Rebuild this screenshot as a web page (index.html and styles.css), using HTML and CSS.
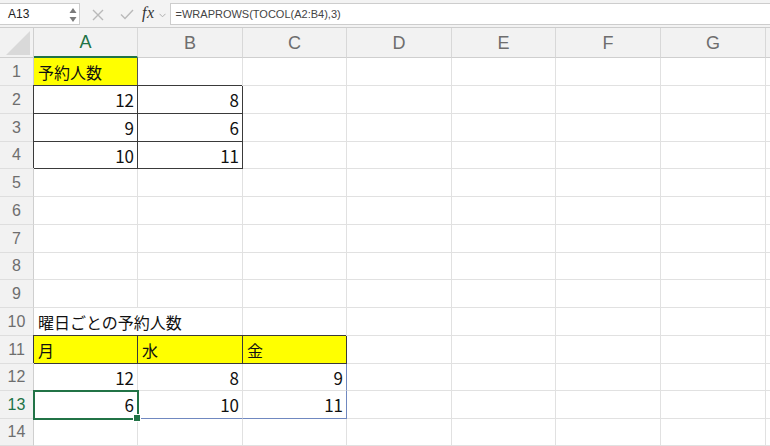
FILE: index.html
```html
<!DOCTYPE html>
<html lang="ja">
<head>
<meta charset="utf-8">
<title>Sheet</title>
<link rel="stylesheet" href="styles.css">
</head>
<body>
<div class="topbar">
  <div class="namebox">
    <span class="ref">A13</span>
    <svg class="spin" width="8" height="16" viewBox="0 0 8 16"><polygon points="4,1 7.5,6 0.5,6" fill="#7a7a7a"/><polygon points="0.5,10 7.5,10 4,15" fill="#7a7a7a"/></svg>
  </div>
  <svg class="ico cancel" width="12" height="12" viewBox="0 0 12 12"><path d="M1 1 L11 11 M11 1 L1 11" stroke="#b9b9b9" stroke-width="1.4" fill="none"/></svg>
  <svg class="ico ok" width="14" height="11" viewBox="0 0 14 11"><path d="M1 5.5 L5 9.5 L13 1" stroke="#b9b9b9" stroke-width="1.4" fill="none"/></svg>
  <span class="fx">fx</span>
  <svg class="chev" width="7" height="5" viewBox="0 0 7 5"><path d="M0.5 0.8 L3.5 3.8 L6.5 0.8" stroke="#b0b0b0" stroke-width="1" fill="none"/></svg>
  <div class="formula">=WRAPROWS(TOCOL(A2:B4),3)</div>
</div>
<div class="sheet">
  <div class="corner"><svg width="34" height="30" viewBox="0 0 34 30"><polygon points="30,3 30,27 6,27" fill="#d9d9d9"/></svg></div>
  <div class="ch on">A</div><div class="ch">B</div><div class="ch">C</div><div class="ch">D</div><div class="ch">E</div><div class="ch">F</div><div class="ch">G</div><div class="ch"></div>

  <div class="rh">1</div>
  <div class="c y a1">予約人数</div><div class="c"></div><div class="c"></div><div class="c"></div><div class="c"></div><div class="c"></div><div class="c"></div><div class="c"></div>

  <div class="rh">2</div>
  <div class="c n bx">12</div><div class="c n bx">8</div><div class="c"></div><div class="c"></div><div class="c"></div><div class="c"></div><div class="c"></div><div class="c"></div>

  <div class="rh">3</div>
  <div class="c n bx">9</div><div class="c n bx">6</div><div class="c"></div><div class="c"></div><div class="c"></div><div class="c"></div><div class="c"></div><div class="c"></div>

  <div class="rh">4</div>
  <div class="c n bx">10</div><div class="c n bx">11</div><div class="c"></div><div class="c"></div><div class="c"></div><div class="c"></div><div class="c"></div><div class="c"></div>

  <div class="rh">5</div>
  <div class="c"></div><div class="c"></div><div class="c"></div><div class="c"></div><div class="c"></div><div class="c"></div><div class="c"></div><div class="c"></div>

  <div class="rh">6</div>
  <div class="c"></div><div class="c"></div><div class="c"></div><div class="c"></div><div class="c"></div><div class="c"></div><div class="c"></div><div class="c"></div>

  <div class="rh">7</div>
  <div class="c"></div><div class="c"></div><div class="c"></div><div class="c"></div><div class="c"></div><div class="c"></div><div class="c"></div><div class="c"></div>

  <div class="rh">8</div>
  <div class="c"></div><div class="c"></div><div class="c"></div><div class="c"></div><div class="c"></div><div class="c"></div><div class="c"></div><div class="c"></div>

  <div class="rh">9</div>
  <div class="c"></div><div class="c"></div><div class="c"></div><div class="c"></div><div class="c"></div><div class="c"></div><div class="c"></div><div class="c"></div>

  <div class="rh">10</div>
  <div class="c ov">曜日ごとの予約人数</div><div class="c"></div><div class="c"></div><div class="c"></div><div class="c"></div><div class="c"></div><div class="c"></div><div class="c"></div>

  <div class="rh">11</div>
  <div class="c y bx">月</div><div class="c y bx">水</div><div class="c y bx">金</div><div class="c"></div><div class="c"></div><div class="c"></div><div class="c"></div><div class="c"></div>

  <div class="rh">12</div>
  <div class="c n">12</div><div class="c n">8</div><div class="c n sr">9</div><div class="c"></div><div class="c"></div><div class="c"></div><div class="c"></div><div class="c"></div>

  <div class="rh on">13</div>
  <div class="c n sb sel">6</div><div class="c n sb">10</div><div class="c n sr sb">11</div><div class="c"></div><div class="c"></div><div class="c"></div><div class="c"></div><div class="c"></div>

  <div class="rh">14</div>
  <div class="c"></div><div class="c"></div><div class="c"></div><div class="c"></div><div class="c"></div><div class="c"></div><div class="c"></div><div class="c"></div>
</div>
</body>
</html>
```

FILE: styles.css
```css
* { box-sizing: border-box; }
html, body { margin: 0; padding: 0; background: #fff; overflow: hidden; }
body { width: 770px; height: 446px; font-family: "Liberation Sans", Arial, sans-serif; }

.topbar {
  height: 28px;
  background: #f3f3f3;
  border-bottom: 1px solid #cdcdcd;
  display: flex;
  align-items: flex-start;
  padding-top: 3px;
}
.namebox {
  width: 80px;
  height: 22px;
  background: #fff;
  border: 1px solid #cdcdcd;
  border-left: none;
  display: flex;
  align-items: center;
  justify-content: space-between;
  padding: 0 2px 0 8px;
}
.ref { font-size: 12px; color: #222; }
.spin { margin-top: 1px; }
.ico { margin-top: 6px; }
.cancel { margin-left: 12px; }
.ok { margin-left: 16px; }
.fx {
  font-family: "Liberation Serif", "Times New Roman", serif;
  font-style: italic;
  font-size: 16px;
  color: #333;
  margin-left: 8px;
  line-height: 20px;
  letter-spacing: 0.5px;
}
.chev { margin-left: 4px; margin-top: 10px; }
.formula {
  flex: 1;
  height: 22px;
  margin-left: 4px;
  background: #fff;
  border: 1px solid #cdcdcd;
  border-right: none;
  font-size: 11px;
  color: #444;
  line-height: 20px;
  padding-left: 5px;
}

.sheet {
  display: grid;
  grid-template-columns: 34px 104px 105px 104px 105px 104px 105px 105px 1fr;
  grid-template-rows: 30px 28px 28px 28px 27px 28px 28px 28px 27px 28px 28px 28px 27px 28px 27px;
}
.corner {
  background: #f2f2f2;
  border-right: 1px solid #cfcfcf;
  border-bottom: 1px solid #cfcfcf;
}
.corner svg { display: block; }
.ch {
  background: #f2f2f2;
  border-right: 1px solid #d8d8d8;
  border-bottom: 1px solid #cfcfcf;
  display: flex;
  align-items: center;
  justify-content: center;
  font-size: 18px;
  color: #6e6e6e;
  padding-top: 1px;
}
.ch.on {
  color: #217346;
  border-bottom: 2px solid #217346;
}
.rh {
  background: #f2f2f2;
  border-right: 1px solid #cfcfcf;
  border-bottom: 1px solid #dedede;
  display: flex;
  align-items: center;
  justify-content: center;
  font-size: 16px;
  color: #6e6e6e;
}
.rh.on { color: #217346; }

.c {
  border-right: 1px solid #e1e1e1;
  border-bottom: 1px solid #e1e1e1;
  display: flex;
  align-items: center;
  padding: 0 3px 0 4px;
  white-space: nowrap;
  font-family: "Noto Sans CJK JP", "Liberation Sans", sans-serif;
  font-size: 16px;
  color: #111;
}
.n { justify-content: flex-end; font-size: 17px; }
.y { background: #ffff00; }
.a1 { border-right-color: #555; border-bottom-color: #3a3a3a; }
.bx {
  border-right-color: #3a3a3a;
  border-bottom-color: #3a3a3a;
  box-shadow: -1px -1px 0 0 #3a3a3a;
}
.ov { border-right-color: transparent; }
.sr { border-right-color: #7088c0; }
.sb { border-bottom-color: #7088c0; }
.sel {
  position: relative;
  z-index: 2;
  outline: 2px solid #217346;
  outline-offset: -1px;
}
.sel::after {
  content: "";
  position: absolute;
  right: -4px;
  bottom: -4px;
  width: 6px;
  height: 6px;
  background: #217346;
  border: 1px solid #fff;
}
```
